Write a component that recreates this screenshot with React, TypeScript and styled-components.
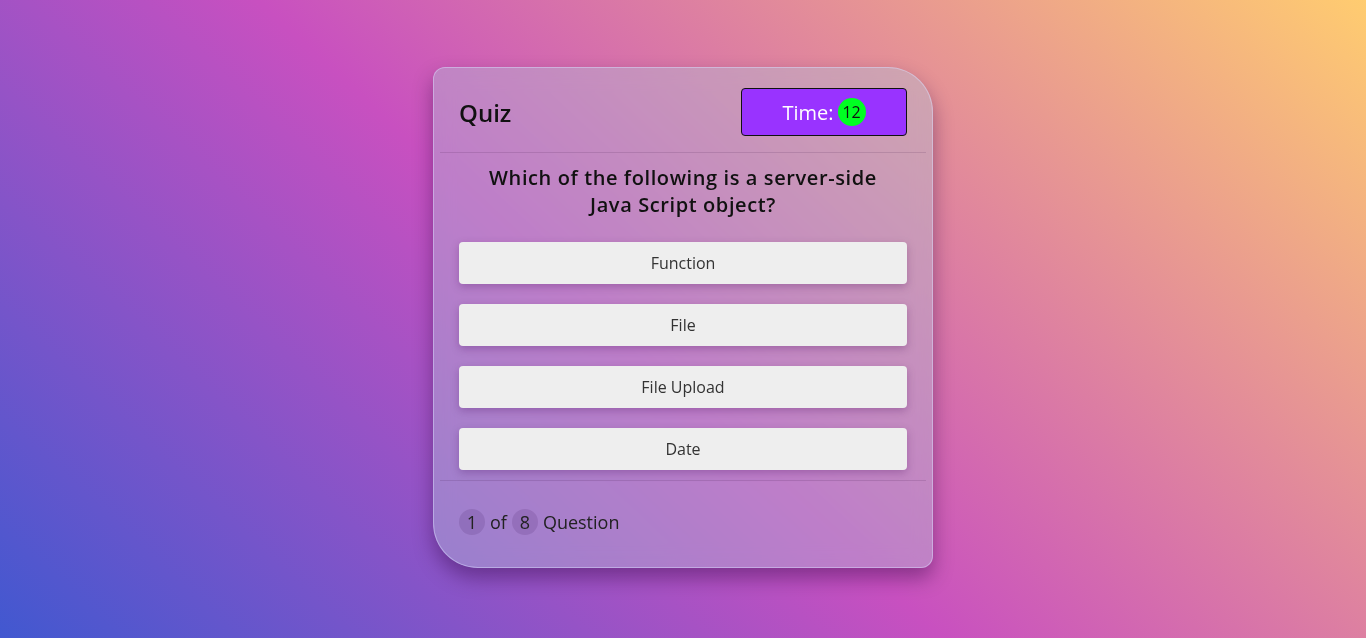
import React from "react";
import styled, { createGlobalStyle } from "styled-components";

const GlobalStyle = createGlobalStyle`
  html, body { margin: 0; padding: 0; }
  body {
    font-family: "Open Sans", "Noto Sans", sans-serif;
    background: linear-gradient(43deg, #4158D0 0%, #C850C0 46%, #FFCC70 100%);
    min-height: 100vh;
  }
  * { box-sizing: border-box; }
`;

const Page = styled.div`
  height: 638px;
  padding-bottom: 3px;
  display: flex;
  align-items: center;
  justify-content: center;
`;

const Card = styled.div`
  width: 500px;
  height: 501px;
  padding: 0 6px;
  display: flex;
  flex-direction: column;
  background: rgba(175, 195, 215, 0.4);
  backdrop-filter: blur(10px);
  border: 1px solid rgba(220, 225, 255, 0.45);
  border-radius: 12px 45px 12px 45px;
  box-shadow: 0 10px 20px rgba(40, 0, 60, 0.4);
`;

const Header = styled.div`
  display: flex;
  align-items: center;
  justify-content: space-between;
  padding: 20px 19px 16px;
`;

const Title = styled.h1`
  margin: 0;
  font-size: 24px;
  font-weight: 600;
  color: #111;
`;

const Timer = styled.div`
  width: 166px;
  height: 48px;
  display: flex;
  align-items: center;
  justify-content: center;
  gap: 4px;
  background: #9933ff;
  border: 1px solid #111;
  border-radius: 4px;
  color: #fff;
  font-size: 20px;
`;

const Count = styled.span`
  width: 28px;
  height: 28px;
  border-radius: 50%;
  background: #00ff22;
  color: #111;
  font-size: 16px;
  display: inline-flex;
  align-items: center;
  justify-content: center;
`;

const Divider = styled.div`
  height: 1px;
  background: rgba(60, 20, 70, 0.15);
`;

const Body = styled.div`
  padding: 11px 19px 10px;
  display: flex;
  flex-direction: column;
`;

const Question = styled.h2`
  margin: 0 0 24px;
  font-size: 20px;
  font-weight: 600;
  letter-spacing: 0.6px;
  line-height: 27px;
  text-align: center;
  color: #111;
  padding: 0 10px;
`;

const Options = styled.div`
  display: flex;
  flex-direction: column;
  gap: 20px;
`;

const Option = styled.button`
  height: 42px;
  border: none;
  border-radius: 4px;
  background: #eeeeee;
  box-shadow: 0 3px 8px rgba(60, 0, 80, 0.25);
  font-family: "Open Sans", "Noto Sans", sans-serif;
  font-size: 16px;
  color: #333;
  cursor: pointer;
`;

const Footer = styled.div`
  flex: 1;
  display: flex;
  align-items: center;
  gap: 5px;
  padding: 0 19px 5px;
  font-size: 18px;
  color: #222;
`;

const Num = styled.span`
  width: 26px;
  height: 26px;
  border-radius: 50%;
  background: rgba(60, 20, 90, 0.15);
  display: inline-flex;
  align-items: center;
  justify-content: center;
`;

const options = ["Function", "File", "File Upload", "Date"];

export default function App() {
  return (
    <>
      <GlobalStyle />
      <Page>
        <Card>
          <Header>
            <Title>Quiz</Title>
            <Timer>
              Time: <Count>12</Count>
            </Timer>
          </Header>
          <Divider />
          <Body>
            <Question>Which of the following is a server-side Java Script object?</Question>
            <Options>
              {options.map((o) => (
                <Option key={o}>{o}</Option>
              ))}
            </Options>
          </Body>
          <Divider />
          <Footer>
            <Num>1</Num>
            <span>of</span>
            <Num>8</Num>
            <span>Question</span>
          </Footer>
        </Card>
      </Page>
    </>
  );
}
